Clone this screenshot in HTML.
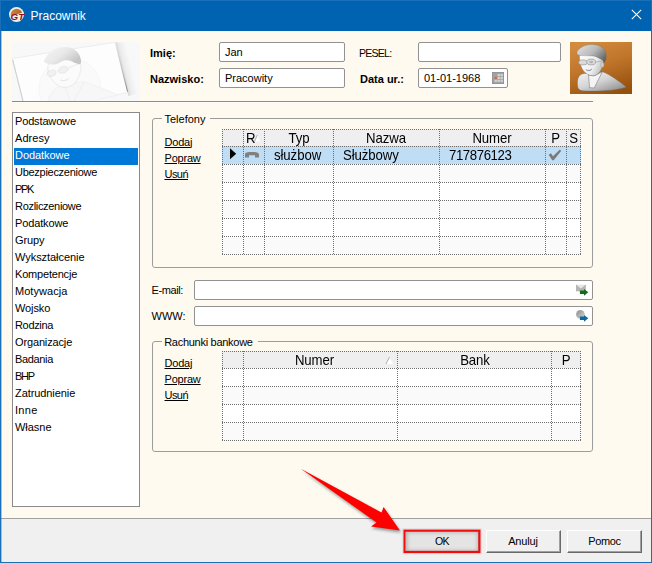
<!DOCTYPE html>
<html lang="pl">
<head>
<meta charset="utf-8">
<title>Pracownik</title>
<style>
html,body{margin:0;padding:0;}
body{width:652px;height:563px;overflow:hidden;background:#0063b1;position:relative;
  font-family:"Liberation Sans",sans-serif;font-size:11px;color:#000;}
.abs{position:absolute;}
#win{position:absolute;left:0;top:0;width:652px;height:563px;background:#0063b1;overflow:hidden;}
#title{position:absolute;left:30.5px;top:7px;height:18px;line-height:18px;font-size:12px;color:#fff;white-space:nowrap;}
#content{position:absolute;left:1px;top:31px;width:649.5px;height:487px;background:#fffaf0;}
#bar{position:absolute;left:1px;top:518px;width:649.5px;height:43.5px;background:#f0f0f0;border-top:1px solid #a0a0a0;box-sizing:border-box;}
.t{position:absolute;white-space:nowrap;line-height:14px;height:14px;}
.b{font-weight:bold;}
.inp{position:absolute;box-sizing:border-box;background:#fff;border:1px solid #929292;border-radius:2px;}
.inp .t{left:5px;top:2px;}
#list{position:absolute;left:12px;top:111.5px;width:127.5px;height:395px;box-sizing:border-box;background:#fff;border:1px solid #8a8a8a;}
#list div{position:absolute;left:1px;width:123.5px;height:17px;line-height:14px;padding-left:1px;box-sizing:border-box;white-space:nowrap;}
#list div.sel{background:#0078d7;color:#fff;}
.grp{position:absolute;box-sizing:border-box;border:1px solid #9c9c9c;border-radius:3px;}
.leg{position:absolute;background:#fffaf0;padding:0 5px 0 2.5px;line-height:14px;height:14px;white-space:nowrap;}
.lnk{position:absolute;white-space:nowrap;text-decoration:underline;line-height:14px;letter-spacing:-0.2px;}
.grid{position:absolute;}
.g13{letter-spacing:-0.080px;font-size:13.2px;line-height:16px;height:16px;position:absolute;white-space:nowrap;transform:scaleY(1.07);transform-origin:0 12.600px;}
.btn{position:absolute;box-sizing:border-box;width:75px;height:23px;background:#f0f0f0;
  border-top:1px solid #fff;border-left:1px solid #fff;border-right:1px solid #696969;border-bottom:1px solid #696969;
  box-shadow:inset -1px -1px 0 #a0a0a0;text-align:center;line-height:21px;}
</style>
</head>
<body>
<div id="win">
  <!-- title bar -->
  <svg class="abs" style="left:8px;top:6px" width="20" height="18" viewBox="0 0 20 18">
    <defs>
      <linearGradient id="ig" x1="0" y1="0" x2="1" y2="0.6">
        <stop offset="0" stop-color="#d08a4a"/><stop offset="1" stop-color="#a85a1c"/>
      </linearGradient>
      <clipPath id="ic"><path d="M0 0H18V5.2L0 11.6Z"/></clipPath>
    </defs>
    <circle cx="8.5" cy="8.5" r="7.5" fill="#f4ede6"/>
    <circle cx="8.6" cy="8.6" r="5.9" fill="url(#ig)" clip-path="url(#ic)"/>
    <text x="2.6" y="14.2" font-family="Liberation Sans, sans-serif" font-size="9.5" font-weight="bold" font-style="italic" fill="#8a1022" textLength="13.5" lengthAdjust="spacingAndGlyphs">GT</text>
  </svg>
  <div id="title">Pracownik</div>
  <svg class="abs" style="left:629.500px;top:8.400px" width="13" height="13" viewBox="0 0 13 13">
    <path d="M1.800 1.800 L11.200 11.200 M11.200 1.800 L1.800 11.200" stroke="#fff" stroke-width="1.050" fill="none"/>
  </svg>

  <div id="content"></div>
  <div class="abs" style="left:1px;top:31px;width:1px;height:531px;background:rgba(0,99,177,0.35);z-index:5;"></div>
  <div class="abs" style="left:0;top:0;width:652px;height:563px;box-sizing:border-box;border:1px solid #1a70b8;z-index:6;pointer-events:none;"></div>
  <div id="bar"></div>

  <!-- header card image -->
  <div class="abs" style="left:12px;top:101px;width:128px;height:3px;background:#f9f9f8;"></div>
  <svg class="abs" style="left:12px;top:42px" width="130" height="59.500" viewBox="0 0 130 59.500">
    <defs>
      <linearGradient id="shd" gradientUnits="userSpaceOnUse" x1="109" y1="26" x2="119" y2="23.500">
        <stop offset="0" stop-color="#d2d2d2"/><stop offset="0.350" stop-color="#ebebeb"/><stop offset="1" stop-color="#f8f8f8"/>
      </linearGradient>
      <linearGradient id="shl" gradientUnits="userSpaceOnUse" x1="103" y1="0" x2="115.500" y2="50">
        <stop offset="0" stop-color="#b0b0b0" stop-opacity="0"/><stop offset="0.400" stop-color="#b0b0b0" stop-opacity="0.500"/><stop offset="1" stop-color="#8c8c8c" stop-opacity="1"/>
      </linearGradient>
      <linearGradient id="hair" x1="0" y1="0" x2="1" y2="0.6">
        <stop offset="0" stop-color="#f6f6f6"/><stop offset="0.550" stop-color="#e8e8e8"/><stop offset="1" stop-color="#c6c6c6"/>
      </linearGradient>
      <clipPath id="cardclip"><path d="M0.700 16.500 L103 0.400 L115.500 50.300 L82 58.500 L60 63 L12 63 Z"/></clipPath>
    </defs>
    <rect x="0" y="0" width="128" height="62" fill="#f8f8f8"/>
    <!-- card shadow on right -->
    <path d="M103 0.400 L115.500 50.300 L116.500 54 L127 51 L114 0 Z" fill="url(#shd)"/>
    <!-- card -->
    <path d="M1.700 16.300 Q0.400 16.600 0.700 17.900 L12 63 L60 63 L82 58.500 L114.600 50.600 Q115.800 50.300 115.500 49 L103.400 1.300 Q103.100 0.200 101.900 0.400 Z" fill="#fdfdfd" stroke="#e6e6e6" stroke-width="0.700"/>
    <path d="M0.700 17.900 L12 63" stroke="#c8c8c8" stroke-width="0.900"/>
    <path d="M103.400 1.300 L115.600 49.600" stroke="url(#shl)" stroke-width="1.100"/>
    <g clip-path="url(#cardclip)">
      <!-- big faint circle background -->
      <circle cx="58" cy="47" r="31" fill="#fafafa" stroke="#f1f1f1" stroke-width="0.600"/>
      <!-- body -->
      <path d="M36 59 C38 50 44 45 52 42 L72 40 C85 44 100 50 106 53 L82 59 Z" fill="#f7f7f7" stroke="#ededed" stroke-width="0.600"/>
      <path d="M52 42 L58 59 M72 40 L62 59" stroke="#ebebeb" stroke-width="0.600"/>
      <!-- head -->
      <path d="M36 23 C35 31 39 39 46 43.500 C51 46.500 58 46 63 41 C67 36 69 30 69.200 23.500 C62 16 44 16 36 23 Z" fill="#fbfbfb" stroke="#e4e4e4" stroke-width="0.700"/>
      <!-- glasses -->
      <ellipse cx="39.600" cy="31.200" rx="4.600" ry="3" fill="#f1f1f1" stroke="#e0e0e0" stroke-width="0.600" transform="rotate(-15 39.600 31.200)"/>
      <ellipse cx="51.200" cy="27.800" rx="5.200" ry="3.200" fill="#f1f1f1" stroke="#e0e0e0" stroke-width="0.600" transform="rotate(-15 51.200 27.800)"/>
      <path d="M56.200 26.200 L67 21.500" stroke="#e2e2e2" stroke-width="0.700"/>
      <!-- mouth -->
      <path d="M48.400 38.100 C51 39 54.500 38.600 56.700 36.500" stroke="#e0e0e0" stroke-width="0.900" fill="none"/>
    </g>
    <path d="M31.800 19.500 C34 11 44 5 53 5 C62 5 68.500 11 69 18.800 C69.200 20.500 68.900 21.500 68.400 22.200 C66 21.800 64.500 21.400 63 20.900 C59 18.500 56 17.600 53.200 18 C49 19 47 21.500 43.600 22.200 C39 22.800 34 22 31.800 19.500 Z" fill="url(#hair)"/>
  </svg>
  <div class="abs" style="left:12px;top:101px;width:581px;height:1px;background:#8c8c8c;"></div><div class="abs" style="left:12px;top:102px;width:581px;height:1px;background:#fffdf8;"></div>

  <!-- header fields -->
  <div class="t b" style="left:150px;top:46px;">Imię:</div>
  <div class="t b" style="left:150px;top:72px;">Nazwisko:</div>
  <div class="inp" style="left:219px;top:42px;width:126px;height:20px;"><div class="t">Jan</div></div>
  <div class="inp" style="left:219px;top:68px;width:126px;height:20px;"><div class="t">Pracowity</div></div>
  <div class="t" style="left:359px;top:46px;letter-spacing:-0.800px;font-size:10.600px;">PESEL:</div>
  <div class="t b" style="left:360px;top:72px;">Data ur.:</div>
  <div class="inp" style="left:418px;top:42px;width:143px;height:20px;"></div>
  <div class="inp" style="left:418px;top:68px;width:90px;height:20px;"><div class="t">01-01-1968</div>
    <svg class="abs" style="left:73.200px;top:3.300px" width="13" height="13" viewBox="0 0 13 13">
      <rect x="0" y="0" width="12" height="12" fill="#8a8a8a"/>
      <rect x="0.500" y="0.500" width="11" height="11" fill="#a2a2a2"/>
      <rect x="5.6" y="2.0" width="2.300" height="2.100" fill="#d4d4d4"/><rect x="8.6" y="2.0" width="2.300" height="2.100" fill="#d4d4d4"/><rect x="2.6" y="4.9" width="2.300" height="2.100" fill="#e2622a"/><rect x="5.6" y="4.9" width="2.300" height="2.100" fill="#d4d4d4"/><rect x="8.6" y="4.9" width="2.300" height="2.100" fill="#d4d4d4"/><rect x="2.6" y="7.8" width="2.300" height="2.100" fill="#d4d4d4"/><rect x="5.6" y="7.8" width="2.300" height="2.100" fill="#d4d4d4"/><rect x="8.6" y="7.8" width="2.300" height="2.100" fill="#d4d4d4"/>
    </svg>
  </div>

  <!-- avatar -->
  <svg class="abs" style="left:570px;top:42px" width="62" height="52" viewBox="0 0 62 52">
    <defs>
      <linearGradient id="ag" x1="0.3" y1="0" x2="0.7" y2="1">
        <stop offset="0" stop-color="#d28a3c"/><stop offset="0.45" stop-color="#c0752a"/><stop offset="1" stop-color="#95500c"/>
      </linearGradient>
      <linearGradient id="sg" x1="0" y1="0" x2="0.9" y2="1">
        <stop offset="0" stop-color="#f6f6f6"/><stop offset="0.5" stop-color="#d4d4d4"/><stop offset="1" stop-color="#8a8a8a"/>
      </linearGradient>
      <linearGradient id="hg" x1="0" y1="0.2" x2="1" y2="0.8">
        <stop offset="0" stop-color="#dedede"/><stop offset="0.5" stop-color="#b8b8b8"/><stop offset="1" stop-color="#5e5e5e"/>
      </linearGradient>
      <linearGradient id="fg" x1="0" y1="0" x2="1" y2="0.4">
        <stop offset="0" stop-color="#ffffff"/><stop offset="0.7" stop-color="#eeeeee"/><stop offset="1" stop-color="#c4c4c4"/>
      </linearGradient>
    </defs>
    <rect width="62" height="52" fill="url(#ag)"/>
    <!-- body -->
    <path d="M7.6 44 C7 38 8 34 11.5 32.2 C15 30.8 19 31 23 32.500 L32.700 29.800 C40 32.500 50 40 56.300 45 C52 47 40 48.800 28 49 C20 49.200 13 49 10.500 48.200 C8.500 47.500 7.800 46 7.600 44 Z" fill="url(#sg)" stroke="#6a6a6a" stroke-width="0.4"/>
    <!-- collar -->
    <path d="M18.500 33 L19.600 45.600 L24.200 46 L32.300 29.800 L24 33.800 Z" fill="#f4f4f4" stroke="#6a6a6a" stroke-width="0.5"/>
    <!-- face -->
    <path d="M9.400 13 C9 20 11 27 15 30.500 C18 33.300 22 34.200 25 33.400 C29 32 32 28 33 22 L34 14 C28 9 15 9 9.400 13 Z" fill="url(#fg)" stroke="#707070" stroke-width="0.5"/>
    <!-- ear -->
    <ellipse cx="32.400" cy="22.800" rx="1.600" ry="2.600" fill="#d0d0d0" stroke="#808080" stroke-width="0.3"/>
    <!-- hair -->
    <path d="M6.800 10.800 C7 8 12 4 18 2.800 C25 1.500 32 3.500 35 8.500 C37 12 36.800 17 34.400 20.600 C33.600 19 32 17.500 30.400 17 C28 15.200 25 14.200 22.500 13.900 C18 13.500 13 13.800 9.500 13.400 C7.500 13 6.800 12 6.800 10.800 Z" fill="url(#hg)" stroke="#6a6a6a" stroke-width="0.3"/>
    <!-- glasses -->
    <ellipse cx="13" cy="20.400" rx="4.400" ry="2.500" fill="#dadada" stroke="#8a8a8a" stroke-width="0.6"/>
    <ellipse cx="21.200" cy="20" rx="4.500" ry="2.900" fill="#dadada" stroke="#8a8a8a" stroke-width="0.6"/>
    <ellipse cx="21.200" cy="20" rx="2" ry="1.300" fill="#b4b4b4"/>
    <path d="M25.700 20 L32 19" stroke="#8a8a8a" stroke-width="0.5"/>
    <!-- mouth -->
    <path d="M15.700 27.600 C18 28.600 20.500 28.400 22 26.800 C20.500 29.500 17.500 29.300 15.700 27.600 Z" fill="#808080" stroke="#808080" stroke-width="0.3"/>
  </svg>

  <!-- left list -->
  <div id="list">
    <div style="top:1.5px;letter-spacing:-0.15px">Podstawowe</div>
    <div style="top:18.5px;letter-spacing:0.06px">Adresy</div>
    <div style="top:35.5px;letter-spacing:-0.06px" class="sel">Dodatkowe</div>
    <div style="top:52.5px;letter-spacing:-0.28px">Ubezpieczeniowe</div>
    <div style="top:69.5px;letter-spacing:-1.3px">PPK</div>
    <div style="top:86.5px;letter-spacing:-0.31px">Rozliczeniowe</div>
    <div style="top:103.5px;letter-spacing:-0.14px">Podatkowe</div>
    <div style="top:120.5px;letter-spacing:-0.1px">Grupy</div>
    <div style="top:137.5px;letter-spacing:-0.05px">Wykształcenie</div>
    <div style="top:154.5px;letter-spacing:-0.19px">Kompetencje</div>
    <div style="top:171.5px;letter-spacing:0.04px">Motywacja</div>
    <div style="top:188.5px;letter-spacing:-0.12px">Wojsko</div>
    <div style="top:205.5px;letter-spacing:-0.34px">Rodzina</div>
    <div style="top:222.5px;letter-spacing:-0.14px">Organizacje</div>
    <div style="top:239.5px;letter-spacing:-0.35px">Badania</div>
    <div style="top:256.5px;letter-spacing:-1.3px">BHP</div>
    <div style="top:273.5px;letter-spacing:-0.08px">Zatrudnienie</div>
    <div style="top:290.5px;letter-spacing:0.29px">Inne</div>
    <div style="top:307.5px;letter-spacing:-0.03px">Własne</div>
  </div>

  <!-- Telefony group -->
  <div class="grp" style="left:152px;top:118px;width:441px;height:150px;"></div>
  <div class="leg" style="left:162px;top:112px;">Telefony</div>
  <div class="lnk" style="left:164.5px;top:134.5px;">Dodaj</div>
  <div class="lnk" style="left:164.5px;top:150.5px;">Popraw</div>
  <div class="lnk" style="left:164.5px;top:166.5px;letter-spacing:-0.55px;">Usuń</div>

  <svg class="grid" style="left:222px;top:129px" width="360" height="126" viewBox="0 0 360 126" shape-rendering="crispEdges">
    <rect x="0" y="0" width="359" height="125" fill="#fff"/>
    <rect x="0" y="35" width="359" height="18" fill="#fafafa"/>
    <rect x="0" y="71" width="359" height="18" fill="#fafafa"/>
    <rect x="0" y="107" width="359" height="18" fill="#fafafa"/>
    <rect x="0" y="0" width="359" height="17" fill="#efefef"/>
    <rect x="0" y="17" width="359" height="18" fill="#bfddf5"/>
    <g stroke="#6e6e6e" stroke-width="1" stroke-dasharray="1 1" fill="none">
      <path d="M0 0.5H359M0 17.5H359M0 35.5H359M0 53.5H359M0 71.5H359M0 89.5H359M0 107.5H359M0 125.5H359"/>
      <path d="M0.5 0V126M21.5 0V126M42.5 0V126M111.5 0V126M217.5 0V126M323.5 0V126M344.5 0V126M358.5 0V126"/>
    </g>
    <path d="M8 19.3 L14.2 24.7 L8 30.2 Z" fill="#000" shape-rendering="auto"/>
    <path d="M23 28.5 V25.5 C23 23.5 25.5 23 30 23 C34.5 23 37 23.5 37 25.5 V28.5 H33 V26.2 H27 V28.5 Z" fill="#808080" shape-rendering="auto"/>
    <path d="M326.7 25.7 L329 24.2 L331 27.2 L337.6 20.7 L339.3 21.7 L331.7 31.3 L330.2 31.3 Z" fill="#7a7a7a" shape-rendering="auto"/>
    <path d="M32.5 12.6 L35.3 6 L38.1 12.6 Z" fill="#fff" shape-rendering="auto"/>
    <path d="M32.5 12.6 L35.3 6" stroke="#9a9a9a" stroke-width="0.8" shape-rendering="auto"/>
  </svg>
  <div class="g13" style="left:246px;top:130.600px;">R</div>
  <div class="g13" style="left:264px;top:130.600px;width:70px;text-align:center;">Typ</div>
  <div class="g13" style="left:333px;top:130.600px;width:106px;text-align:center;">Nazwa</div>
  <div class="g13" style="left:439px;top:130.600px;width:106px;text-align:center;">Numer</div>
  <div class="g13" style="left:545px;top:130.600px;width:21px;text-align:center;">P</div>
  <div class="g13" style="left:566px;top:130.600px;width:15px;text-align:center;">S</div>
  <div class="g13" style="left:274px;top:148px;">służbow</div>
  <div class="g13" style="left:343px;top:148px;">Służbowy</div>
  <div class="g13" style="left:449px;top:148px;letter-spacing:-0.400px;">717876123</div>

  <!-- email / www -->
  <div class="t" style="left:151.5px;top:283px;letter-spacing:-0.4px;">E-mail:</div>
  <div class="t" style="left:151.5px;top:309px;">WWW:</div>
  <div class="inp" style="left:194px;top:280px;width:399px;height:20px;"></div>
  <div class="inp" style="left:194px;top:306px;width:399px;height:20px;"></div>
  <svg class="abs" style="left:575px;top:284px" width="14" height="13" viewBox="0 0 14 13">
    <rect x="1" y="0.900" width="9.800" height="6.400" fill="#b4b4b4"/>
    <path d="M1 0.900 L5.900 5 L10.800 0.900 Z" fill="#e6e6e6"/>
    <path d="M1 0.900 L5.900 5 L10.800 0.900" stroke="#a0a0a0" stroke-width="0.500" fill="none"/>
    <path d="M4.900 6.600 H9 V4.900 L13.300 8.300 L9 11.800 V10 H4.900 Z" fill="#176a1c"/>
  </svg>
  <svg class="abs" style="left:575px;top:310px" width="14" height="13" viewBox="0 0 14 13">
    <defs><linearGradient id="gl" x1="0" y1="0" x2="1" y2="1"><stop offset="0" stop-color="#8e8e8e"/><stop offset="1" stop-color="#d4d4d4"/></linearGradient></defs>
    <circle cx="5.400" cy="4.400" r="4.300" fill="url(#gl)"/>
    <path d="M4.900 6.600 H9 V4.900 L13.300 8.300 L9 11.800 V10 H4.900 Z" fill="#0c6a9c"/>
  </svg>

  <!-- Rachunki bankowe group -->
  <div class="grp" style="left:152px;top:341px;width:441px;height:111px;"></div>
  <div class="leg" style="left:161.700px;top:335px;letter-spacing:-0.280px;">Rachunki bankowe</div>
  <div class="lnk" style="left:164.5px;top:356px;">Dodaj</div>
  <div class="lnk" style="left:164.5px;top:372px;">Popraw</div>
  <div class="lnk" style="left:164.5px;top:388px;letter-spacing:-0.55px;">Usuń</div>

  <svg class="grid" style="left:222px;top:351px" width="360" height="90" viewBox="0 0 360 90" shape-rendering="crispEdges">
    <rect x="0" y="0" width="359" height="89" fill="#fff"/>
    <rect x="0" y="35" width="359" height="18" fill="#fafafa"/>
    <rect x="0" y="71" width="359" height="18" fill="#fafafa"/>
    <rect x="0" y="0" width="359" height="17" fill="#efefef"/>
    <g stroke="#6e6e6e" stroke-width="1" stroke-dasharray="1 1" fill="none">
      <path d="M0 0.500H359M0 17.500H359M0 35.500H359M0 53.500H359M0 71.500H359M0 89.500H359"/>
      <path d="M0.500 0V90M21.500 0V90M175.500 0V90M329.500 0V90M358.500 0V90"/>
    </g>
    <path d="M164 13 L167.500 6 L171 13 Z" fill="#fff" shape-rendering="auto"/>
    <path d="M164 13 L167.500 6" stroke="#9a9a9a" stroke-width="0.800" shape-rendering="auto"/>
  </svg>
  <div class="g13" style="left:243px;top:352.600px;width:143px;text-align:center;">Numer</div>
  <div class="g13" style="left:398px;top:352.600px;width:154px;text-align:center;">Bank</div>
  <div class="g13" style="left:551px;top:352.600px;width:30px;text-align:center;">P</div>

  <!-- buttons -->
  <div class="btn" style="left:405px;top:530px;letter-spacing:-0.600px;font-size:10.600px;text-indent:-1px;background:#e4e4e4;box-shadow:inset -1px -1px 0 #a0a0a0, inset 0 0 4px 1px rgba(0,0,0,0.25);">OK</div>
  <div class="btn" style="left:486px;top:530px;letter-spacing:-0.150px;text-indent:-1px;">Anuluj</div>
  <div class="btn" style="left:567px;top:530px;letter-spacing:-0.35px;">Pomoc</div>
  <svg class="abs" style="left:400px;top:526px" width="84" height="30" viewBox="400 526 84 30"><rect x="404.5" y="530.6" width="75" height="21.4" fill="none" stroke="#f40c0c" stroke-width="2.300"/><rect x="402.8" y="528.9" width="78.4" height="24.8" fill="none" stroke="#d0d0d0" stroke-width="1" opacity="0.7"/></svg>

  <!-- arrow -->
  <svg class="abs" style="left:290px;top:455px;filter:drop-shadow(1px 2px 1.800px rgba(0,0,0,0.400));" width="130" height="90" viewBox="290 455 130 90">
    <path d="M300.800 468.800 L381.500 512.500 L383.600 507 L400 530.600 L371 526.600 L376.500 522.500 Z" fill="#ff0000"/>
  </svg>
</div>
</body>
</html>
